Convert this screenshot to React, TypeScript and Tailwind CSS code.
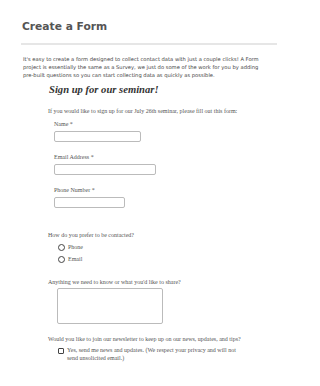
import React from 'react';

const sans = { fontFamily: '"DejaVu Sans", Verdana, sans-serif' };
const serif = { fontFamily: '"Liberation Serif", "Times New Roman", serif' };

const Field: React.FC<{ label: string; width: string; top: string }> = ({ label, width, top }) => (
  <div className={`ml-[6px] ${top}`}>
    <div className="text-[6px] leading-[8px] text-[#555]">{label}</div>
    <div className={`mt-[3px] h-[11px] ${width} rounded-[2px] border border-[#bbb] bg-white`} />
  </div>
);

const Radio: React.FC<{ label: string }> = ({ label }) => (
  <div className="flex items-center gap-[3px] h-[12px]">
    <span className="w-[7px] h-[7px] rounded-full border border-[#444]" />
    <span className="text-[6px] text-[#555]">{label}</span>
  </div>
);

export default function App() {
  return (
    <div className="w-[298px] h-[386px] bg-white px-[21px] pt-[19px]">
      <h1 className="text-[10.7px] leading-[16px] font-bold text-[#555] pl-px" style={sans}>
        Create a Form
      </h1>
      <div className="mt-[8px] h-[2px] bg-[#e6e6e6]" />
      <p className="mt-[10px] pl-[2px] text-[5.2px] leading-[8px] text-[#444] whitespace-nowrap" style={sans}>
        It's easy to create a form designed to collect contact data with just a couple clicks! A Form
        <br />
        project is essentially the same as a Survey, we just do some of the work for you by adding
        <br />
        pre-built questions so you can start collecting data as quickly as possible.
      </p>

      <div className="pl-[27px] text-[#444]" style={serif}>
        <h2 className="mt-[4px] text-[10.6px] leading-[14px] italic font-bold text-[#333] pl-px">
          Sign up for our seminar!
        </h2>
        <p className="mt-[10px] text-[6px] leading-[8px] text-[#555]">
          If you would like to sign up for our July 26th seminar, please fill out this form:
        </p>
        <Field label="Name *" width="w-[87px]" top="mt-[5px]" />
        <Field label="Email Address *" width="w-[102px]" top="mt-[11px]" />
        <Field label="Phone Number *" width="w-[71px]" top="mt-[11px]" />

        <p className="mt-[23px] text-[6px] leading-[8px] text-[#555]">How do you prefer to be contacted?</p>
        <div className="ml-[10px] mt-[2px]">
          <Radio label="Phone" />
          <Radio label="Email" />
        </div>

        <p className="mt-[13px] text-[6px] leading-[8px] text-[#555]">
          Anything we need to know or what you'd like to share?
        </p>
        <div className="ml-[9px] mt-[2px] h-[36px] w-[106px] rounded-[2px] border border-[#bbb] bg-white" />

        <p className="mt-[11px] text-[6px] leading-[8px] text-[#555]">
          Would you like to join our newsletter to keep up on our news, updates, and tips?
        </p>
        <div className="ml-[10px] mt-[4px] flex items-start gap-[3px]">
          <span className="mt-[1px] w-[6px] h-[6px] shrink-0 rounded-[1px] border border-[#444]" />
          <span className="w-[172px] text-[6px] leading-[7.5px] text-[#555]">
            Yes, send me news and updates. (We respect your privacy and will not send unsolicited email.)
          </span>
        </div>
      </div>
    </div>
  );
}
